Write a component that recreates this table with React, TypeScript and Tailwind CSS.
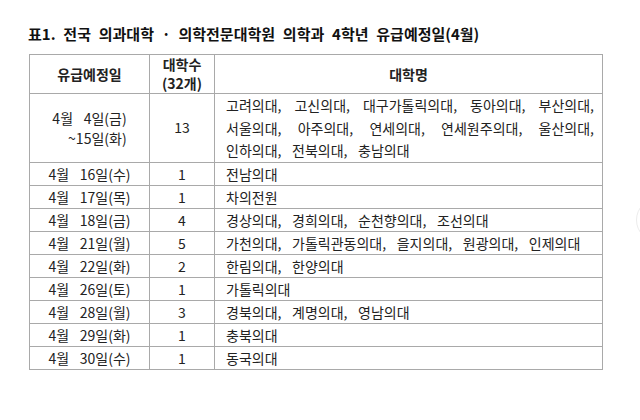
import React from "react";

const rows = [
  { date: "4월 16일(수)", count: "1", names: "전남의대" },
  { date: "4월 17일(목)", count: "1", names: "차의전원" },
  { date: "4월 18일(금)", count: "4", names: "경상의대, 경희의대, 순천향의대, 조선의대" },
  { date: "4월 21일(월)", count: "5", names: "가천의대, 가톨릭관동의대, 을지의대, 원광의대, 인제의대" },
  { date: "4월 22일(화)", count: "2", names: "한림의대, 한양의대" },
  { date: "4월 26일(토)", count: "1", names: "가톨릭의대" },
  { date: "4월 28일(월)", count: "3", names: "경북의대, 계명의대, 영남의대" },
  { date: "4월 29일(화)", count: "1", names: "충북의대" },
  { date: "4월 30일(수)", count: "1", names: "동국의대" },
];

const cell = "border border-[#a9a9a9] p-0 align-middle";

export default function App() {
  return (
    <div
      className="relative w-[640px] h-[420px] overflow-hidden bg-white text-[#222]"
      style={{ fontFamily: '"Noto Sans CJK KR", "Noto Sans", sans-serif' }}
    >
      <div className="pt-6 pl-[28px]">
        <h1 className="text-[15px] leading-[20px] font-bold text-[#111] [word-spacing:4.4px]">
          표1. 전국 의과대학 · 의학전문대학원 의학과 4학년 유급예정일(4월)
        </h1>

        <table className="mt-[10px] ml-px w-[573px] border-collapse table-fixed text-[14px] [word-spacing:7.5px]">
          <colgroup>
            <col className="w-[120px]" />
            <col className="w-[65px]" />
            <col className="w-[388px]" />
          </colgroup>
          <thead>
            <tr className="h-[39px]">
              <th className={`${cell} font-bold leading-[20px]`}>유급예정일</th>
              <th className={`${cell} font-bold leading-[19px]`}>
                대학수
                <br />
                (32개)
              </th>
              <th className={`${cell} font-bold`}>대학명</th>
            </tr>
          </thead>
          <tbody>
            <tr className="h-[68px]">
              <td className={`${cell} text-center`}>
                <div className="inline-flex flex-col items-end leading-[20px]">
                  <span>4월 4일(금)</span>
                  <span>~15일(화)</span>
                </div>
              </td>
              <td className={`${cell} text-center`}>13</td>
              <td className={`${cell} pl-[11px] pr-[8px] leading-[22.5px]`}>
                <div className="text-justify [text-align-last:justify]">
                  고려의대, 고신의대, 대구가톨릭의대, 동아의대, 부산의대,
                </div>
                <div className="text-justify [text-align-last:justify]">
                  서울의대, 아주의대, 연세의대, 연세원주의대, 울산의대,
                </div>
                <div>인하의대, 전북의대, 충남의대</div>
              </td>
            </tr>
            {rows.map((r) => (
              <tr key={r.date} className="h-[23px]">
                <td className={`${cell} text-center leading-[22px]`}>{r.date}</td>
                <td className={`${cell} text-center leading-[22px]`}>{r.count}</td>
                <td className={`${cell} pl-[11px] leading-[22px]`}>{r.names}</td>
              </tr>
            ))}
          </tbody>
        </table>
      </div>

      <div className="absolute left-[636px] top-[198px] w-[44px] h-[44px] rounded-full border border-[#ececec]" />
    </div>
  );
}
